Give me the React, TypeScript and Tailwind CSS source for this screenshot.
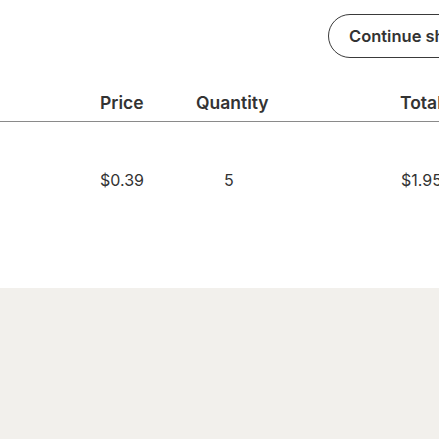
export default function App() {
  return (
    <div className="w-[439px] h-[439px] overflow-hidden bg-white text-[#333333]" style={{ fontFamily: "Inter, 'Noto Sans', sans-serif" }}>
      <div className="w-[600px]">
        <div className="h-[288px]">
          <div className="flex pt-[14px] pl-[328px]">
            <button className="h-[44px] px-5 rounded-full border border-[#3a3a3a] text-[16.5px] font-semibold whitespace-nowrap">
              Continue shopping
            </button>
          </div>
          <div className="mt-[27px] flex h-[37px] pt-[5px] items-start border-b border-[#8a8a8a] text-[17.5px] font-semibold">
            <div className="w-[100px]" />
            <div className="w-[96px]">Price</div>
            <div className="w-[204px]">Quantity</div>
            <div>Total</div>
          </div>
          <div className="mt-[46px] flex text-[16px]">
            <div className="w-[100px]" />
            <div className="w-[124px]">$0.39</div>
            <div className="w-[177px]">5</div>
            <div>$1.95</div>
          </div>
        </div>
        <div className="h-[151px] bg-[#f2f0ec]" />
      </div>
    </div>
  );
}
